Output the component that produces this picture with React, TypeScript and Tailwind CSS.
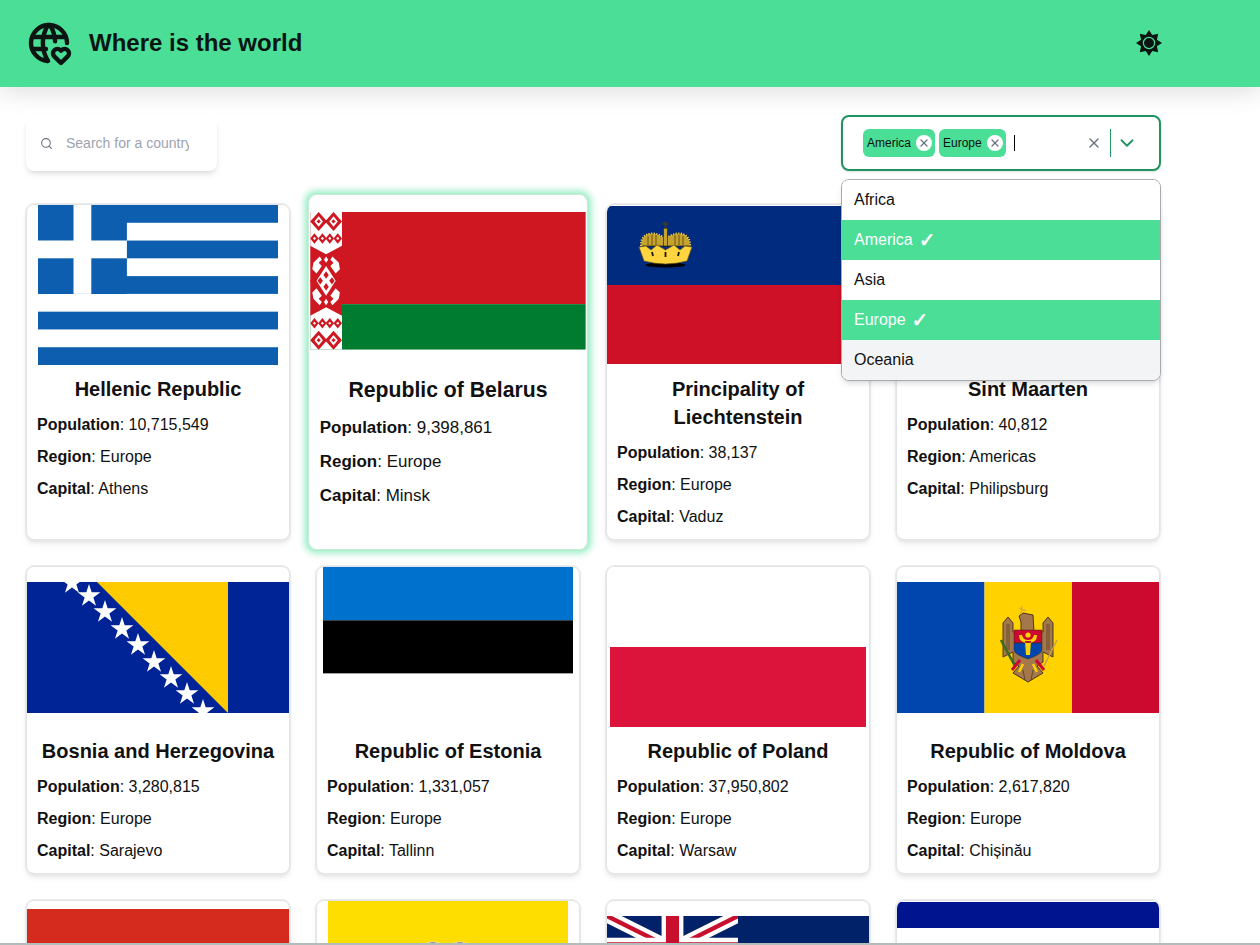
import React from "react";
import { Search, X, ChevronDown } from "lucide-react";
import { TbWorldHeart } from "react-icons/tb";

function starPoints(cx: number, cy: number, r: number, inner = 0.382, n = 5) {
  const pts: string[] = [];
  for (let i = 0; i < n * 2; i++) {
    const rad = i % 2 === 0 ? r : r * inner;
    const a = -Math.PI / 2 + (i * Math.PI) / n;
    pts.push(`${(cx + rad * Math.cos(a)).toFixed(2)},${(cy + rad * Math.sin(a)).toFixed(2)}`);
  }
  return pts.join(" ");
}

const Sun = () => (
  <svg width="26" height="26" viewBox="0 0 26 26" className="block">
    <polygon points={starPoints(13, 13, 13, 0.66, 8)} fill="#0c1512" />
    <circle cx="13" cy="13" r="5.6" fill="#0c1512" stroke="#4ade97" strokeWidth="1.2" />
  </svg>
);

const Greece = () => (
  <svg width="240" height="160" viewBox="0 0 240 160" className="block">
    <rect width="240" height="160" fill="#fff" />
    {[0, 2, 4, 6, 8].map((i) => (
      <rect key={i} y={(i * 160) / 9} width="240" height={160 / 9} fill="#0d5eaf" />
    ))}
    <rect width="88.9" height="88.9" fill="#0d5eaf" />
    <rect x="35.5" width="17.8" height="88.9" fill="#fff" />
    <rect y="35.5" width="88.9" height="17.8" fill="#fff" />
  </svg>
);

const BelarusHalf = () => (
  <g>
    {[8, 22].map((x) => (
      <g key={x}>
        <polygon points={`${x},0 ${x + 8},9 ${x},18 ${x - 8},9`} fill="#ce1720" />
        <polygon points={`${x},4 ${x + 4},9 ${x},14 ${x - 4},9`} fill="#fff" />
        <polygon points={`${x},7 ${x + 2},9 ${x},11 ${x - 2},9`} fill="#ce1720" />
      </g>
    ))}
    {[4, 11.5, 18.5, 26].map((x) => (
      <g key={x}>
        <polygon points={`${x},20 ${x + 4},25 ${x},30 ${x - 4},25`} fill="#ce1720" />
        <polygon points={`${x},23.5 ${x + 1.5},25 ${x},26.5 ${x - 1.5},25`} fill="#fff" />
      </g>
    ))}
    <polygon points="0,32 15,40 30,32 30,66 0,66" fill="#ce1720" />
    <path d="M3 48 L9 42 L11 45 L8 48 L11 51 L6 58 L2 54 Z" fill="#fff" />
    <path d="M27 48 L21 42 L19 45 L22 48 L19 51 L24 58 L28 54 Z" fill="#fff" />
    <polygon points="15,42 17,45 15,48 13,45" fill="#fff" />
  </g>
);

const Belarus = () => (
  <svg width="260" height="130" viewBox="0 0 260 130" className="mt-[2px] block">
    <rect width="260" height="87" fill="#ce1720" />
    <rect y="87" width="260" height="43" fill="#007c30" />
    <rect width="30" height="130" fill="#fff" />
    <BelarusHalf />
    <g transform="translate(0 130) scale(1 -1)">
      <BelarusHalf />
    </g>
    <polygon points="15,51 24,65 15,79 6,65" fill="#fff" />
    <polygon points="15,56 17.5,59.5 15,63 12.5,59.5" fill="#ce1720" />
    <polygon points="15,67 17.5,70.5 15,74 12.5,70.5" fill="#ce1720" />
    <polygon points="9.5,61.5 12,65 9.5,68.5 7,65" fill="#ce1720" />
    <polygon points="20.5,61.5 23,65 20.5,68.5 18,65" fill="#ce1720" />
  </svg>
);

const Liechtenstein = () => (
  <svg width="262" height="158" viewBox="0 0 262 158" className="block">
    <rect width="262" height="79" fill="#002b7f" />
    <rect y="79" width="262" height="79" fill="#ce1126" />
    <ellipse cx="58.5" cy="59" rx="20" ry="2.5" fill="#000" />
    <path d="M34 40 C33 27 46 24 56 31 L61 31 C71 24 84 27 83 40 Z" fill="#c6a32e" stroke="#2e2407" strokeWidth="0.8" />
    <path d="M34 40 C33 27 46 24 56 31 L61 31 C71 24 84 27 83 40" fill="none" stroke="#f2d769" strokeWidth="1.8" strokeDasharray="1.2 1.4" />
    <path d="M41 30 L41 39 M45 28.5 L45 39 M49 29 L49 39 M68 29 L68 39 M72 28.5 L72 39 M76 30 L76 39" stroke="#6b5512" strokeWidth="1" />
    <rect x="56.5" y="22" width="4" height="18" fill="#c6a32e" stroke="#2e2407" strokeWidth="0.7" />
    <path d="M58.5 15 V23 M55.5 18 H61.5" stroke="#4a3c10" strokeWidth="1.5" />
    <path d="M32 41 L39 40 L44 44 L50 39 L58.5 44 L67 39 L73 44 L78 40 L85 41 L80 55 Q58.5 61 37 55 Z" fill="#fed43f" stroke="#6b5512" strokeWidth="0.7" />
    <path d="M45 46 L46 50 M58.5 46 V51 M72 46 L71 50" stroke="#1c1603" strokeWidth="1.8" />
  </svg>
);

const Bosnia = () => (
  <svg width="262" height="131" viewBox="0 0 262 131" className="block">
    <rect width="262" height="131" fill="#002395" />
    <polygon points="70,0 201,0 201,131" fill="#fecb00" />
    {[
      [45, 1],
      [62, 14],
      [78, 30],
      [95, 47],
      [111, 63],
      [127, 80],
      [144, 96],
      [160, 112],
      [176, 129],
    ].map(([x, y]) => (
      <polygon key={x} points={starPoints(x, y, 12)} fill="#fff" />
    ))}
  </svg>
);

const Estonia = () => (
  <svg width="250" height="160" viewBox="0 0 250 160" className="block">
    <rect width="250" height="53.3" fill="#0072ce" />
    <rect y="53.3" width="250" height="53.3" fill="#000" />
    <rect y="106.6" width="250" height="53.4" fill="#fff" />
  </svg>
);

const Poland = () => (
  <svg width="256" height="160" viewBox="0 0 256 160" className="block">
    <rect width="256" height="80" fill="#fff" />
    <rect y="80" width="256" height="80" fill="#dc143c" />
  </svg>
);

const Moldova = () => (
  <svg width="262" height="131" viewBox="0 0 262 131" className="block">
    <rect width="87.5" height="131" fill="#0046ae" />
    <rect x="87.5" width="87.5" height="131" fill="#ffd200" />
    <rect x="175" width="87" height="131" fill="#cc092f" />
    <path d="M106 75 V41 L111 35 L116 41 V50 H124 V40 L122 34 L126 31 L136 33 L137 50 H146 V41 L151 35 L156 41 V75 L146 70 V80 L140 84 L146 91 L131 100 L116 91 L122 84 L116 80 V70 Z" fill="#a4784b" stroke="#3d2a16" strokeWidth="0.9" />
    <path d="M110 42 V68 M112 42 V68 M150 42 V68 M152 42 V68 M126 88 L128 98 M136 88 L134 98" stroke="#3d2a16" strokeWidth="0.6" />
    <path d="M117 48 H145 V61 H117 Z" fill="#cc092f" stroke="#3d2a16" strokeWidth="0.5" />
    <path d="M117 61 H145 V68 Q145 72 131 77 Q117 72 117 68 Z" fill="#0046ae" stroke="#3d2a16" strokeWidth="0.5" />
    <path d="M122 53 Q122 61 131 61 Q140 61 140 53 L137 53 Q136 58 131 58 Q126 58 125 53 Z M128 59 H134 L133 73 H129 Z" fill="#ffd200" />
    <circle cx="131" cy="53" r="2.6" fill="#ffd200" />
    <path d="M104 58 L118 84" stroke="#3a6a25" strokeWidth="2.6" />
    <path d="M160 58 L147 84" stroke="#c9a24a" strokeWidth="1.6" />
    <path d="M123 78 L115 88 M139 78 L147 88" stroke="#cc092f" strokeWidth="3" />
    <path d="M126 82 L122 90 M136 82 L140 90" stroke="#ffd200" strokeWidth="2.5" />
    <path d="M122 26 L129 29 M125 24 L124 32" stroke="#e0b030" strokeWidth="1.4" />
  </svg>
);

const RedFlag = () => (
  <svg width="262" height="144" viewBox="0 0 262 144" className="block">
    <rect width="262" height="144" fill="#d52b1e" />
  </svg>
);

const Yellow = () => (
  <svg width="240" height="160" viewBox="0 0 240 160" className="block">
    <rect width="240" height="160" fill="#fedd00" />
    <ellipse cx="105" cy="44" rx="7" ry="3" fill="#2a2a20" stroke="#e8e8d8" />
    <ellipse cx="132" cy="44" rx="7" ry="3" fill="#2a2a20" stroke="#e8e8d8" />
  </svg>
);

const Ensign = () => (
  <svg width="262" height="131" viewBox="0 0 262 131" className="block">
    <rect width="262" height="131" fill="#012169" />
    <svg width="131" height="65.5" viewBox="0 0 60 30">
      <rect width="60" height="30" fill="#012169" />
      <path d="M0 0 L60 30 M60 0 L0 30" stroke="#fff" strokeWidth="6" />
      <path d="M0 0 L60 30 M60 0 L0 30" stroke="#c8102e" strokeWidth="2" />
      <path d="M30 0 V30 M0 15 H60" stroke="#fff" strokeWidth="10" />
      <path d="M30 0 V30 M0 15 H60" stroke="#c8102e" strokeWidth="6" />
    </svg>
  </svg>
);

const CostaRica = () => (
  <svg width="262" height="158" viewBox="0 0 262 158" className="block">
    <rect width="262" height="26" fill="#00148f" />
    <rect y="26" width="262" height="26" fill="#fff" />
    <rect y="52" width="262" height="54" fill="#ce1126" />
  </svg>
);

type Country = {
  name: string;
  population: string;
  region: string;
  capital: string;
  flag: React.ReactNode;
  hover?: boolean;
};

const countries: Country[] = [
  { name: "Hellenic Republic", population: "10,715,549", region: "Europe", capital: "Athens", flag: <Greece /> },
  { name: "Republic of Belarus", population: "9,398,861", region: "Europe", capital: "Minsk", flag: <Belarus />, hover: true },
  { name: "Principality of Liechtenstein", population: "38,137", region: "Europe", capital: "Vaduz", flag: <Liechtenstein /> },
  { name: "Sint Maarten", population: "40,812", region: "Americas", capital: "Philipsburg", flag: <div className="h-40 w-[262px]" /> },
  { name: "Bosnia and Herzegovina", population: "3,280,815", region: "Europe", capital: "Sarajevo", flag: <Bosnia /> },
  { name: "Republic of Estonia", population: "1,331,057", region: "Europe", capital: "Tallinn", flag: <Estonia /> },
  { name: "Republic of Poland", population: "37,950,802", region: "Europe", capital: "Warsaw", flag: <Poland /> },
  { name: "Republic of Moldova", population: "2,617,820", region: "Europe", capital: "Chișinău", flag: <Moldova /> },
  { name: "Republic of Albania", population: "2,837,743", region: "Europe", capital: "Tirana", flag: <RedFlag /> },
  { name: "Vatican City State", population: "451", region: "Europe", capital: "Vatican City", flag: <Yellow /> },
  { name: "Falkland Islands", population: "2,563", region: "Americas", capital: "Stanley", flag: <Ensign /> },
  { name: "Republic of Costa Rica", population: "5,094,118", region: "Americas", capital: "San José", flag: <CostaRica /> },
];

function Card({ c }: { c: Country }) {
  return (
    <div
      className={
        c.hover
          ? "relative z-10 scale-[1.06] overflow-hidden rounded-lg border border-[#c9ead9] bg-white pb-[10px] shadow-[0_0_7px_2px_rgba(74,222,151,0.6)]"
          : "overflow-hidden rounded-lg border-[1px] border-[#e3e4e6] bg-white pb-[10px] shadow-md outline outline-1 outline-[#e9eaec]"
      }
    >
      <div className="flex h-40 items-center justify-center">{c.flag}</div>
      <h2 className="mt-[10px] mb-[10px] px-[10px] text-center text-xl leading-7 font-bold">{c.name}</h2>
      <div className="flex flex-col gap-2 px-[10px] text-base leading-6">
        <p>
          <b>Population</b>: {c.population}
        </p>
        <p>
          <b>Region</b>: {c.region}
        </p>
        <p>
          <b>Capital</b>: {c.capital}
        </p>
      </div>
    </div>
  );
}

function Tag({ label }: { label: string }) {
  return (
    <span className="flex h-7 items-center gap-[5px] rounded-md bg-[#4ade97] pr-[3px] pl-1 text-xs text-[#111]">
      {label}
      <span className="flex h-4 w-4 items-center justify-center rounded-full bg-white">
        <X size={12} strokeWidth={2.5} className="text-[#6b7280]" />
      </span>
    </span>
  );
}

function Option({ label, kind }: { label: string; kind: "plain" | "selected" | "focus" }) {
  const cls =
    kind === "selected"
      ? "bg-[#4ade97] text-white"
      : kind === "focus"
        ? "bg-[#f3f4f6] text-[#111]"
        : "bg-white text-[#111]";
  return (
    <div className={`flex h-10 items-center gap-[6px] px-3 text-base ${cls}`}>
      {label}
      {kind === "selected" && (
        <span className="font-['DejaVu_Sans',sans-serif] text-xl leading-none font-bold [-webkit-text-stroke:0.6px_white]">
          ✓
        </span>
      )}
    </div>
  );
}

export default function App() {
  return (
    <div className="relative h-[945px] overflow-hidden bg-white font-['Liberation_Sans',Arial,sans-serif] text-[#111]">
      <header className="relative z-20 flex h-[87px] items-center justify-between bg-[#4ade97] pr-[98px] pl-[25px] shadow-[0_4px_24px_rgba(0,0,0,0.14)]">
        <div className="flex items-center gap-4">
          <TbWorldHeart size={48} strokeWidth={2.2} className="mb-[2px] text-[#0c1512]" />
          <h1 className="mb-[2px] text-2xl font-bold text-[#0c1512]">Where is the world</h1>
        </div>
        <div className="mb-[2px]">
          <Sun />
        </div>
      </header>

      <main className="pt-7 pr-[100px] pl-[26px]">
        <div className="-mr-px flex items-end justify-between">
          <div className="flex h-[54px] w-[191px] items-center gap-[13px] rounded-lg bg-white pr-7 pb-[2px] pl-[14px] shadow-md">
            <Search size={13} strokeWidth={2} className="shrink-0 text-[#6b7280]" />
            <input
              readOnly
              placeholder="Search for a country"
              className="w-full min-w-0 bg-transparent text-sm outline-none placeholder:text-[#9ca3af]"
            />
          </div>
          <div className="relative z-30 w-[320px]">
            <div className="flex h-14 items-center rounded-lg border-2 border-[#1f9460] bg-white pr-[33px] pl-5 shadow-sm">
              <div className="flex items-center gap-1">
                <Tag label="America" />
                <Tag label="Europe" />
                <span className="ml-1 h-4 w-px bg-black" />
              </div>
              <div className="flex-1" />
              <X size={16} strokeWidth={2} className="mr-2 text-[#6b7280]" />
              <span className="h-7 w-px bg-[#1f9460]" />
              <ChevronDown size={22} strokeWidth={2} className="-mr-[12px] ml-[5px] text-[#1f9460]" />
            </div>
            <div className="absolute top-16 left-0 w-full overflow-hidden rounded-lg border border-[#a9abb3] bg-white shadow-md">
              <Option label="Africa" kind="plain" />
              <Option label="America" kind="selected" />
              <Option label="Asia" kind="plain" />
              <Option label="Europe" kind="selected" />
              <Option label="Oceania" kind="focus" />
            </div>
          </div>
        </div>

        <div className="mt-[33px] grid grid-cols-4 gap-[26px]">
          {countries.map((c) => (
            <Card key={c.name} c={c} />
          ))}
        </div>
      </main>
      <div className="fixed inset-x-0 bottom-0 z-40 h-[2px] bg-[#b4bbbb]" />
    </div>
  );
}
